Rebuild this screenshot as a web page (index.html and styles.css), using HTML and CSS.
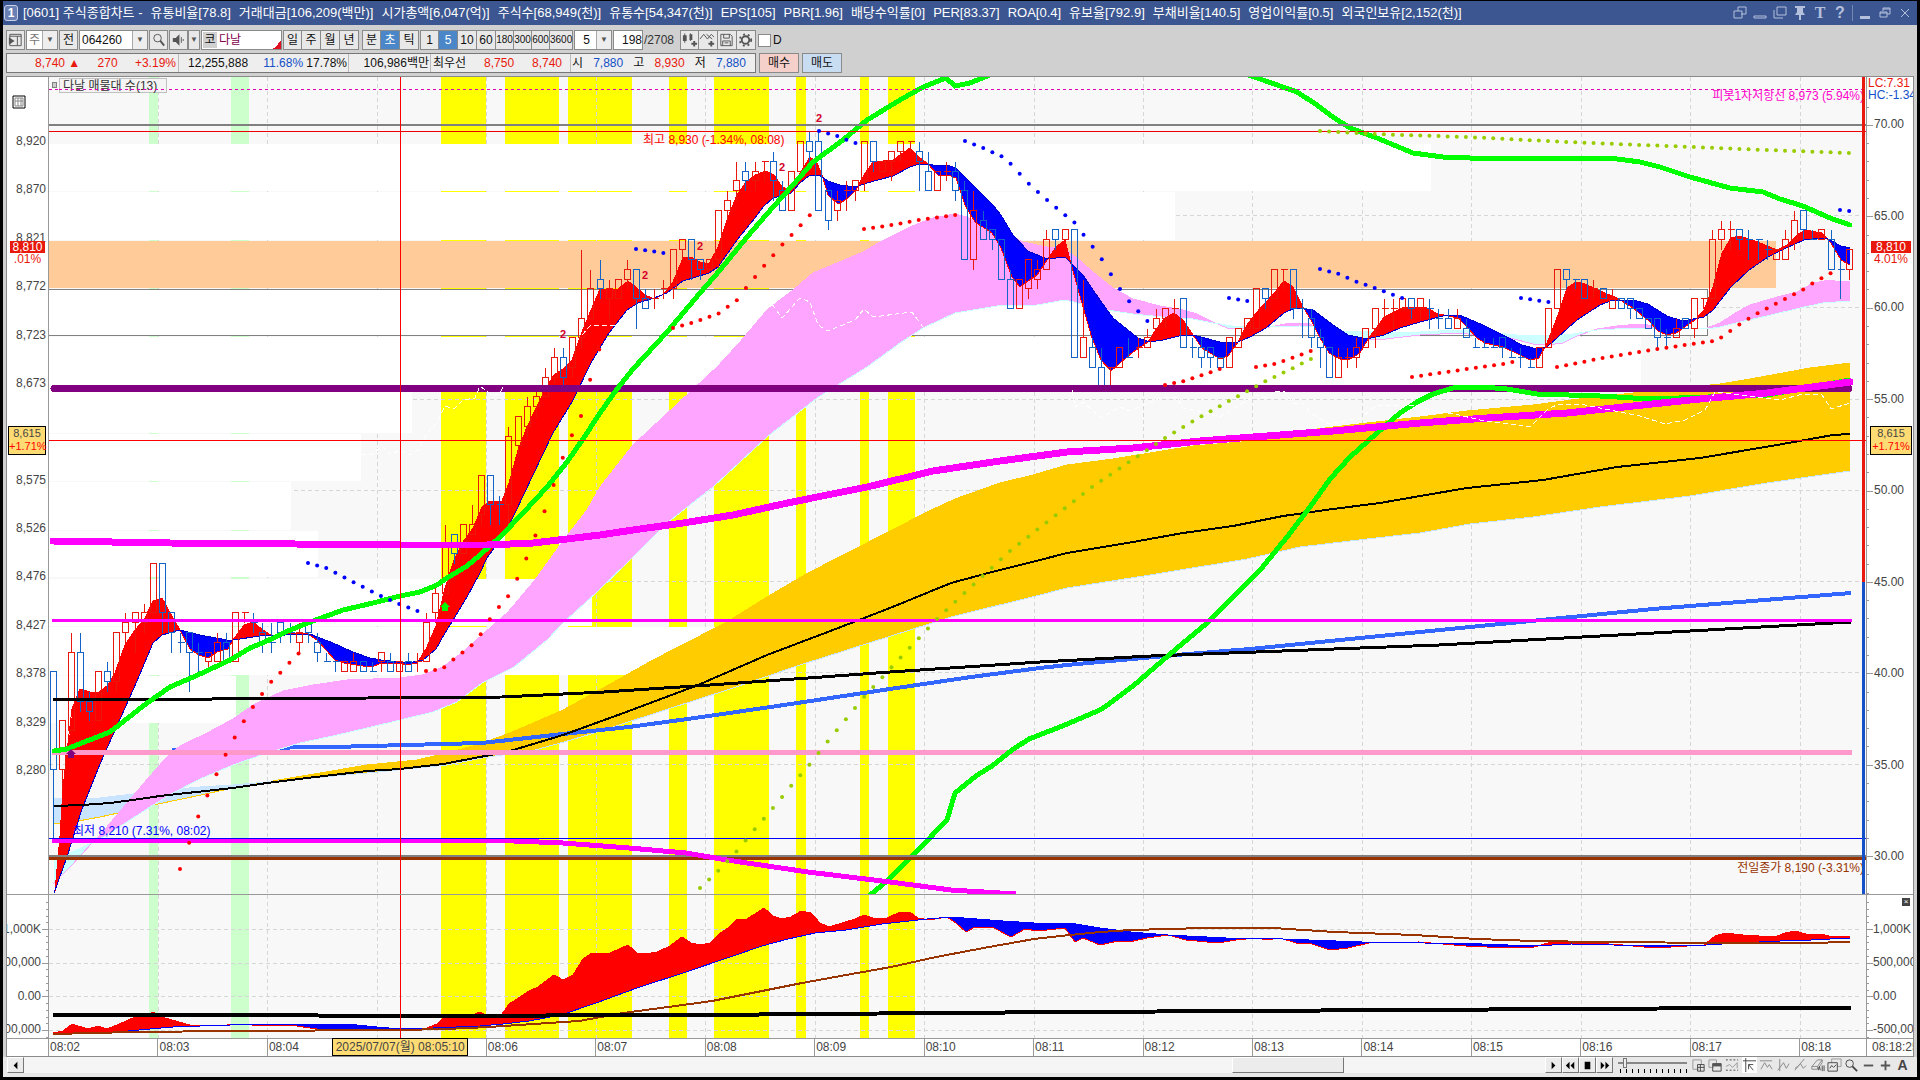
FILE: index.html
```html
<!DOCTYPE html>
<html lang="ko">
<head>
<meta charset="utf-8">
<title>주식종합차트</title>
<link rel="stylesheet" href="styles.css">
</head>
<body>
<div class="window">
  <header class="titlebar">
    <span class="badge">1</span>
    <h1 class="title"><span>[0601] 주식종합차트 -</span><span>유통비율[78.8]</span><span>거래대금[106,209(백만)]</span><span>시가총액[6,047(억)]</span><span>주식수[68,949(천)]</span><span>유통수[54,347(천)]</span><span>EPS[105]</span><span>PBR[1.96]</span><span>배당수익률[0]</span><span>PER[83.37]</span><span>ROA[0.4]</span><span>유보율[792.9]</span><span>부채비율[140.5]</span><span>영업이익률[0.5]</span><span>외국인보유[2,152(천)]</span></h1>
    <div class="win-tools">
      <button aria-label="연결"><svg viewBox="0 0 16 16"><path d="M6 6V2h8v7H9M2 6h8v7H2z"/></svg></button>
      <button aria-label="접기"><svg viewBox="0 0 16 16"><path d="M2 11h12v2H2z"/></svg></button>
      <button aria-label="복제"><svg viewBox="0 0 16 16"><path d="M5 2h9v8H5zM2 5v8h9"/></svg></button>
      <button aria-label="고정"><svg viewBox="0 0 16 16"><path class="solid" d="M3 1h10v2h-2v4l2 3H9v5H7v-5H3l2-3V3H3z"/></svg></button>
      <button aria-label="글꼴" class="glyph serif">T</button>
      <button aria-label="도움말" class="glyph">?</button>
      <i class="rule"></i>
      <button aria-label="최소화"><svg viewBox="0 0 16 16"><path class="solid" d="M3 11h10v3H3z"/></svg></button>
      <button aria-label="이전 크기"><svg viewBox="0 0 16 16"><path d="M6 6V3h7v6h-3M3 7h7v5H3zM3 8h7M6 4h7"/></svg></button>
      <button aria-label="닫기"><svg viewBox="0 0 16 16"><path d="M4 4l8 8M12 4l-8 8"/></svg></button>
    </div>
  </header>

  <div class="toolbar">
    <button class="tb" aria-label="목록"><svg viewBox="0 0 18 18"><path d="M3 3h12v12H3zM3 5h12M11 5v10"/><path class="solid" d="M2 6l6 4-6 4z"/></svg></button>
    <label class="select w32 dim"><select aria-label="구분"><option>주</option></select></label>
    <button class="tb">전</button>
    <label class="select w68"><input value="064260" aria-label="종목코드"></label>
    <button class="tb" aria-label="검색"><svg viewBox="0 0 18 18"><circle cx="8" cy="7" r="4"/><path d="M11 10l4 5" stroke-width="2"/></svg></button>
    <button class="tb" aria-label="소리"><svg viewBox="0 0 18 18"><path class="solid" d="M3 7h3l4-4v12l-4-4H3z"/><path d="M12 6v6M14 8v2"/></svg></button>
    <button class="tb narrow" aria-label="소리 메뉴">▼</button>
    <div class="stock"><b>코</b><span>다날</span></div>
    <div class="group"><button class="tb">일</button><button class="tb">주</button><button class="tb">월</button><button class="tb">년</button></div>
    <div class="group spaced"><button class="tb">분</button><button class="tb on">초</button><button class="tb">틱</button></div>
    <div class="group"><button class="tb">1</button><button class="tb on">5</button><button class="tb">10</button><button class="tb">60</button><button class="tb long">180</button><button class="tb long">300</button><button class="tb long">600</button><button class="tb longer">3600</button></div>
    <label class="select w38 center"><select aria-label="간격"><option>5</option></select></label>
    <input class="count" value="198" aria-label="표시 봉수">
    <span class="total">/2708</span>
    <div class="group">
      <button class="tb" aria-label="차트 추가"><svg viewBox="0 0 18 18"><path class="solid" d="M2 4h4v6H2zM9 3h3v6H9zM11 12h6v2h-6zM13 10h2v6h-2z"/><path d="M4 2v10M10 2v8"/></svg></button>
      <button class="tb" aria-label="지표 추가"><svg viewBox="0 0 18 18"><path d="M1 8l4-5 4 5 4-5 3 3M8 3l6 5"/><path class="solid" d="M10 12h6v2h-6zM12 10h2v6h-2z"/></svg></button>
      <button class="tb" aria-label="저장"><svg viewBox="0 0 18 18"><path d="M3 3h10l2 2v10H3zM6 3v4h6V3M5 15v-5h8v5M7 12h4"/></svg></button>
      <button class="tb" aria-label="설정"><svg viewBox="0 0 18 18"><circle cx="9" cy="9" r="4" stroke-width="2"/><circle cx="9" cy="9" r="6" stroke-width="2" stroke-dasharray="2 3"/></svg></button>
    </div>
    <label class="check"><input type="checkbox">D</label>
  </div>

  <div class="quotes">
    <div class="quote-box">
      <div class="cell c1 up"><span>8,740 ▲</span><span>270</span><span>+3.19%</span></div>
      <div class="cell c2"><span>12,255,888</span><span class="down push">11.68%</span><span>17.78%</span></div>
      <div class="cell c3"><span>106,986백만</span></div>
      <div class="cell c4"><span>최우선</span><span class="up">8,750</span><span class="up">8,740</span></div>
      <div class="cell c5"><span>시</span><span class="down">7,880</span><span>고</span><span class="up">8,930</span><span>저</span><span class="down">7,880</span></div>
    </div>
    <button class="order buy">매수</button>
    <button class="order sell">매도</button>
  </div>

  <main class="chart">
    <div class="axis left main-row">
      <svg class="grid-icon" viewBox="0 0 14 14"><path d="M1 1h12v12H1z"/><path class="in" d="M3 3h8v8H3zM3 6h8M6 3v8M9 3v8"/></svg>
      <div class="prices"><span>8,920</span><span>8,870</span><span>8,821</span><span>8,772</span><span>8,723</span><span>8,673</span><span class="blank"></span><span>8,575</span><span>8,526</span><span>8,476</span><span>8,427</span><span>8,378</span><span>8,329</span><span>8,280</span></div>
      <div class="now"><b>8,810</b><span>.01%</span></div>
      <div class="cross"><span>8,615</span><em>+1.71%</em></div>
    </div>
    <svg class="plot main-row" id="price" viewBox="49 77 1817 817" preserveAspectRatio="none"></svg>
    <div class="axis right main-row">
      <svg class="ticks" id="ticks-main" viewBox="0 77 46 817" preserveAspectRatio="none"></svg>
      <div class="extremes"><span class="up">LC:7.31</span><span class="down">HC:-1.34</span></div>
      <div class="scores"><span>70.00</span><span>65.00</span><span>60.00</span><span>55.00</span><span>50.00</span><span>45.00</span><span>40.00</span><span>35.00</span><span>30.00</span></div>
      <div class="now"><b>8,810</b><span>4.01%</span></div>
      <div class="cross"><span>8,615</span><em>+1.71%</em></div>
    </div>

    <div class="axis left sub-row">
      <svg class="ticks" id="ticks-left" viewBox="0 895 41 143" preserveAspectRatio="none"></svg>
      <div class="volumes"><span>1,000K</span><span>500,000</span><span>0.00</span><span>-500,000</span></div>
    </div>
    <svg class="plot sub-row" id="volume" viewBox="49 895 1817 143" preserveAspectRatio="none"></svg>
    <div class="axis right sub-row">
      <svg class="ticks" id="ticks-right" viewBox="0 895 46 143" preserveAspectRatio="none"></svg>
      <button class="close" aria-label="지표 닫기">×</button>
      <div class="volumes"><span>1,000K</span><span>500,000</span><span>0.00</span><span>-500,000</span></div>
    </div>

    <div class="time-pad"></div>
    <div class="times">
      <span>08:02</span><span>08:03</span><span>08:04</span><span></span><span>08:06</span><span>08:07</span><span>08:08</span><span>08:09</span><span>08:10</span><span>08:11</span><span>08:12</span><span>08:13</span><span>08:14</span><span>08:15</span><span>08:16</span><span>08:17</span><span class="last">08:18</span>
      <div class="date">2025/07/07(월) 08:05:10</div>
    </div>
    <div class="time-end">08:18:25</div>
  </main>

  <footer class="bottom">
    <button class="key" aria-label="왼쪽으로"><svg viewBox="0 0 16 16"><path class="solid" d="M10 4v8L6 8z"/></svg></button>
    <div class="track"><i class="before"></i><i class="thumb"></i><i class="after"></i></div>
    <button class="key" aria-label="재생"><svg viewBox="0 0 16 16"><path class="solid" d="M6 4v8l4-4z"/></svg></button>
    <button class="key" aria-label="뒤로"><svg viewBox="0 0 16 16"><path class="solid" d="M7 4v8L3 8zM12 4v8L8 8z"/></svg></button>
    <button class="key" aria-label="정지"><svg viewBox="0 0 16 16"><path class="solid" d="M5 4h6v8H5z"/></svg></button>
    <button class="key" aria-label="앞으로"><svg viewBox="0 0 16 16"><path class="solid" d="M4 4v8l4-4zM9 4v8l4-4z"/></svg></button>
    <div class="speed"><input type="range" min="0" max="100" value="8" aria-label="속도"><i></i></div>
    <div class="draw-tools">
      <button aria-label="추가"><svg viewBox="0 0 16 16"><path d="M8 12H2V2h9v5" stroke="#999"/><path d="M7 7h7v7H7zM7 10h7M10 7v7"/></svg></button>
      <button aria-label="겹치기"><svg viewBox="0 0 16 16"><path d="M6 10H1V2h8v4" stroke="#999"/><path d="M5 6h9v8H5z"/><path class="solid" d="M5 6h9v3H5z"/></svg></button>
      <button aria-label="구간"><svg viewBox="0 0 16 16"><path d="M1 2h13M1 13h13" stroke-dasharray="2 2"/><path d="M1 9l4-2 3 3 5-5M13 5v6" stroke="#999"/></svg></button>
      <button aria-label="십자선" class="pressed"><svg viewBox="0 0 16 16"><path d="M1 3h14M4 0v15"/><path d="M12 13L7 7M7 12V7h5"/></svg></button>
      <button aria-label="수평선"><svg viewBox="0 0 16 16"><path d="M1 3h13M2 12l4-7 3 5 2-3 3 5" stroke="#888"/></svg></button>
      <button aria-label="수직선"><svg viewBox="0 0 16 16"><path d="M4 1v13M2 13l6-8 3 6 3-5" stroke="#888"/></svg></button>
      <button aria-label="추세선"><svg viewBox="0 0 16 16"><path d="M2 13L12 1M2 11l3-2 3-3 3 5 3-3" stroke="#888"/></svg></button>
      <button aria-label="지우기"><svg viewBox="0 0 16 16"><path d="M2 9l6-7h5l-5 7zM2 9v3h6V9M8 12l5-7V2" stroke="#888"/><path d="M9 13l1-4 1 4M13 8v6M15 8v6"/></svg></button>
      <button aria-label="차트 모음"><svg viewBox="0 0 16 16"><path d="M5 5V1h10v8h-4" stroke="#999"/><path d="M1 5h10v9H1zM3 11l2-3 2 2 3-3"/></svg></button>
      <button aria-label="확대경"><svg viewBox="0 0 16 16"><circle cx="6" cy="6" r="4"/><path d="M9 9l5 5" stroke-width="2"/></svg></button>
      <button aria-label="축소"><svg viewBox="0 0 16 16"><path class="solid" d="M3 7h10v2H3z"/></svg></button>
      <button aria-label="확대"><svg viewBox="0 0 16 16"><path class="solid" d="M3 7h10v2H3zM7 3h2v10H7z"/></svg></button>
      <button aria-label="자동" class="auto">A</button>
    </div>
  </footer>
</div>
<script src="script.js"></script>
</body>
</html>
```

FILE: styles.css
```css
* { box-sizing: border-box; }

body {
  margin: 0;
  padding: 1px 3px 3px;
  height: 100vh;
  background: #000;
  color: #111;
  font: 12px/16px "Liberation Sans Narrow", "Liberation Sans", "Noto Sans CJK KR", sans-serif;
}

button, input, select { font: inherit; color: inherit; margin: 0; padding: 0; }
svg { display: block; fill: none; stroke: #555; }
svg .solid { fill: #555; stroke: none; }

.up { color: #e8180c; }
.down { color: #1450c8; }

.window {
  display: flex;
  flex-direction: column;
  height: 100%;
  background: #d0d0d0;
}

/* title bar */
.titlebar {
  display: flex;
  align-items: center;
  height: 24px;
  padding: 0 4px 0 1px;
  background: #3b5690;
  color: #fff;
}
.badge {
  width: 14px;
  height: 16px;
  border: 1px solid #c8d2e8;
  border-radius: 3px;
  background: #6a80b4;
  font-weight: bold;
  line-height: 14px;
  text-align: center;
}
.title {
  display: flex;
  flex: 1;
  gap: 8px;
  min-width: 0;
  margin: 0 0 0 5px;
  overflow: hidden;
  font-size: 13px;
  font-weight: normal;
  white-space: nowrap;
}
.win-tools { display: flex; align-items: center; gap: 4px; }
.win-tools button { width: 16px; height: 18px; border: 0; background: none; color: #b4c0dc; }
.win-tools svg { width: 16px; height: 16px; stroke: #b4c0dc; }
.win-tools .solid { fill: #b4c0dc; }
.win-tools .glyph { font-size: 16px; font-weight: bold; }
.win-tools .serif { font-family: "Liberation Serif", serif; }
.win-tools .rule { width: 1px; height: 16px; background: #7488b4; }

/* toolbar */
.toolbar {
  display: flex;
  align-items: center;
  gap: 1px;
  height: 20px;
  margin: 5px 3px 3px;
  white-space: nowrap;
}
.tb {
  width: 19px;
  height: 20px;
  border: 1px solid #8a8a8a;
  background: #e8e8e8;
  text-align: center;
}
.tb svg { width: 17px; height: 18px; }
.tb.narrow { width: 12px; margin-left: -1px; color: #555; font-size: 8px; }
.tb.on { background: #4a86c8; color: #fff; }
.group { display: flex; }
.group .tb + .tb { border-left-width: 0; }
.group.spaced { margin-left: 2px; }
.group .long { width: 18px; font-size: 10px; }
.group .longer { width: 23px; font-size: 10px; }
.select {
  display: flex;
  height: 20px;
  border: 1px solid #8a8a8a;
  background: #fff;
}
.select::after {
  content: "▼";
  width: 14px;
  border-left: 1px solid #aaa;
  background: #eee;
  color: #555;
  font-size: 8px;
  line-height: 18px;
  text-align: center;
}
.select select, .select input {
  flex: 1;
  width: 10px;
  min-width: 0;
  padding-left: 2px;
  border: 0;
  background: #fff;
  appearance: none;
}
.select.dim { color: #777; }
.select.center select { text-align: center; }
.w32 { width: 32px; }
.w68 { width: 69px; }
.w38 { width: 38px; }
.stock {
  display: flex;
  gap: 2px;
  width: 81px;
  height: 20px;
  padding: 1px;
  border: 1px solid #8a8a8a;
  background: linear-gradient(135deg, transparent 50%, #e01020 50%) right bottom / 8px 8px no-repeat #fff;
  color: #80004c;
}
.stock b { width: 14px; background: #d0d0d0; color: #111; font-weight: normal; text-align: center; }
.count { width: 30px; height: 20px; border: 1px solid #8a8a8a; background: #fff; text-align: right; }
.total { width: 35px; color: #333; }
.check { display: flex; align-items: center; gap: 2px; margin-left: 1px; }
.check input { width: 13px; height: 13px; appearance: none; border: 1px solid #8a8a8a; background: #fff; }

/* quote strip */
.quotes { display: flex; gap: 3px; height: 20px; margin: 0 3px 3px; white-space: nowrap; }
.quote-box { display: flex; width: 750px; border: 1px solid #777; background: #eee; }
.cell { display: flex; align-items: center; justify-content: space-between; border-right: 1px solid #bbb; }
.cell:last-child { border: 0; }
.c1 { width: 172px; padding: 0 2px 0 28px; }
.c2 { width: 170px; padding: 0 1px 0 9px; }
.push { margin-left: 12px; }
.c3 { width: 82px; justify-content: flex-end; padding-right: 1px; }
.c4 { width: 140px; padding: 0 8px 0 2px; }
.c5 { flex: 1; padding: 0 9px 0 1px; }
.order { width: 40px; border: 1px solid #8a8a8a; }
.buy { background: #f5d0ca; }
.sell { background: #c8dcf2; }

/* chart */
.chart {
  display: grid;
  flex: 1;
  grid-template-columns: 42px minmax(0, 1fr) 47px;
  grid-template-rows: minmax(0, 1fr) 144px 18px;
  min-height: 0;
  margin: 0 3px;
  border: 1px solid #8a8a8a;
  background: #fff;
}
.plot { width: 100%; height: 100%; background: #f8f8f8; font-size: 12px; }
.sub-row { border-top: 1px solid #999; }
.axis { position: relative; min-width: 0; min-height: 0; overflow: hidden; color: #444; }
.axis.left { border-right: 1px solid #999; }
.axis.right { border-left: 1px solid #999; }
.ticks { position: absolute; inset: 0; width: 100%; height: 100%; stroke: #999; }
.grid-icon { position: absolute; left: 5px; top: 18px; width: 14px; height: 14px; stroke: #000; }
.grid-icon .in { stroke: #888; }
.prices, .scores, .volumes { display: flex; flex-direction: column; justify-content: space-between; height: 100%; }
.prices { align-items: flex-end; padding: 56px 2px 116px 0; }
.blank { height: 16px; }
.scores { padding: 39px 0 30px 7px; }
.left .volumes { align-items: flex-end; padding: 26px 7px 1px 0; }
.right .volumes { padding: 26px 0 1px 6px; }
.extremes { position: absolute; left: 1px; top: 0; display: flex; flex-direction: column; line-height: 12px; }
.now, .cross { position: absolute; line-height: 12px; text-align: center; }
.now { top: 20%; width: 35px; margin-top: 1px; color: #e8180c; }
.now b { display: block; background: #e8180c; color: #fff; font-weight: normal; }
.left .now { left: 3px; }
.right .now { left: 4px; width: 40px; }
.cross {
  top: 43%;
  height: 29px;
  margin-top: -2px;
  border: 1px solid #000;
  background: #ffdc73;
  font-size: 11px;
  line-height: 13px;
}
.left .cross { left: 1px; width: 38px; }
.right .cross { left: 3px; width: 42px; }
.cross span, .cross em { display: block; font-style: normal; white-space: nowrap; }
.cross em { color: #f00; }
.close { position: absolute; right: 3px; top: 3px; width: 8px; height: 8px; border: 0; background: #444; color: #fff; font-size: 8px; line-height: 8px; }

.times { position: relative; display: flex; border-top: 1px solid #999; color: #444; }
.times span { flex: 1094 1 0; padding-left: 1px; border-left: 1px solid #999; }
.times span:first-child { border: 0; }
.times .last { flex-grow: 660; }
.time-pad { border-top: 1px solid #999; border-right: 1px solid #999; }
.time-end { padding-left: 5px; border-top: 1px solid #999; border-left: 1px solid #999; color: #444; overflow: hidden; white-space: nowrap; }
.date {
  position: absolute;
  left: 19%;
  top: -1px;
  width: 136px;
  height: 18px;
  margin-left: -62px;
  border: 1px solid #000;
  background: #ffdc73;
  text-align: center;
}

/* scroll bar and drawing tools */
.bottom { display: flex; height: 20px; padding: 0 7px 4px 4px; background: #e8e8e8; }
.bottom svg { width: 15px; height: 15px; stroke: #444; }
.key { width: 17px; height: 16px; border: 1px solid; border-color: #fff #777 #777 #fff; background: #ececec; }
.key .solid { fill: #000; }
.track { display: flex; flex: 1; background: #f5f5f5; }
.before { flex: 1210; }
.thumb { flex: 111; border: 1px solid; border-color: #fff #777 #777 #fff; background: #ececec; }
.after { flex: 201; }
.speed { width: 78px; padding: 0 4px 0 5px; }
.speed input { display: block; width: 69px; height: 11px; appearance: none; background: linear-gradient(#888, #888) center / 100% 2px no-repeat; }
.speed input::-webkit-slider-thumb { appearance: none; width: 4px; height: 10px; border: 1px solid #777; background: #eee; }
.speed i { display: block; height: 4px; margin: 1px 0 0 2px; background: repeating-linear-gradient(90deg, #000 0 1px, transparent 1px 6px); }
.draw-tools { display: flex; gap: 2px; }
.draw-tools button { width: 15px; height: 16px; border: 0; background: none; }
.draw-tools .pressed { background: #fff; }
.draw-tools .auto { color: #444; font-size: 14px; font-weight: bold; }
```

FILE: script.js
```js
const NS = 'http://www.w3.org/2000/svg';
const STEP = 9.118;      // width of one bar
const FIRST = 53.5;      // centre of the first bar
const barX = i => FIRST + STEP * i;
// depth of a price below the high of 8,930, in ticks of 10 won
const tickY = k => Math.round(131.3 + 9.818 * k);

function add(svg, tag, attrs, text) {
  const el = document.createElementNS(NS, tag);
  for (const k in attrs) el.setAttribute(k, attrs[k]);
  if (text) el.textContent = text;
  svg.appendChild(el);
  return el;
}
const parse = s => s.trim().split(/\s+/).map(p => p.split(',').map(Number));
const path = (svg, d, stroke, width = 1, more = {}) =>
  add(svg, 'path', { d, stroke, 'stroke-width': width, fill: 'none', 'shape-rendering': 'crispEdges', ...more });
const line = (svg, pts, stroke, width, more) =>
  path(svg, 'M' + parse(pts).map(p => p.join(' ')).join('L'), stroke, width, more);
const rect = (svg, x0, y0, x1, y1, fill) =>
  add(svg, 'rect', { x: x0, y: y0, width: x1 - x0, height: y1 - y0, fill, stroke: 'none', 'shape-rendering': 'crispEdges' });

function at(pts, x) {
  let i = 1;
  while (i < pts.length - 1 && pts[i][0] < x) i++;
  const [a, b] = [pts[i - 1], pts[i]];
  return a[1] + (b[1] - a[1]) * Math.max(0, Math.min(1, (x - a[0]) / (b[0] - a[0])));
}
// area between two curves, coloured by which one is on top
function band(svg, a, b, over, under, edgeA, edgeB) {
  const pa = parse(a), pb = parse(b);
  let up = '', down = '';
  for (let x = 54; x <= 1849; x++) {
    const ya = at(pa, x), yb = at(pb, x);
    const seg = `M${x + .5} ${Math.min(ya, yb)}V${Math.max(ya, yb)}`;
    if (ya < yb) up += seg; else down += seg;
  }
  path(svg, up, over);
  path(svg, down, under);
  line(svg, a, edgeA, 1);
  line(svg, b, edgeB, 1);
}
function dots(svg, runs, fill) {
  for (const run of runs) {
    const p = parse(run), end = p[p.length - 1][0];
    for (let x = p[0][0]; x <= end + 2; x += STEP) {
      add(svg, 'circle', { cx: x, cy: at(p, x), r: 2, fill, stroke: 'none' });
    }
  }
}

const STRIPES = [[149, 158, '#cfc'], [231, 249, '#cfc'], [441, 486], [505, 559], [568, 632], [669, 687], [714, 769], [796, 806], [860, 869], [888, 915]];
function backdrop(svg, top, bottom, rows) {
  for (const [a, b, c] of STRIPES) rect(svg, a, top, b, bottom, c || '#ff0');
  let d = '';
  for (let i = 1; i <= 16; i++) d += `M${Math.round(48.5 + 109.45 * i) + .5} ${top}V${bottom}`;
  for (const y of rows) d += `M49 ${y + .5}H1862`;
  path(svg, d, '#d6d6d6', 1, { 'stroke-dasharray': '4 3' });
}

// ---- price panel -------------------------------------------------------
const P = document.getElementById('price');
backdrop(P, 77, 894, [215, 307, 399, 490, 581, 672, 764]);

// volume profile: top, bottom, right end
for (const [t, b, r] of [[144, 191, 1431], [192, 240, 1175], [289, 336, 1707], [337, 386, 1641], [386, 433, 412], [434, 481, 361], [482, 530, 291], [531, 577, 318], [579, 626, 592], [627, 675, 730], [676, 723, 236]])
  rect(P, 49, t, r, b, '#fff');
rect(P, 49, 241, 1776, 288, '#fc9');
path(P, 'M49 289.5H1707.5V335.5H49', '#808080');

const band3A = '53,823 67,823 100,817 127,811 153,805 187,798 233,788 267,782 290,778 320,773 367,765 417,760 447,753 480,744 510,733 563,710 612,683 653,660 686,643 727,622 767,597 808,573 849,552 900,526 927,512 955,499 1000,483 1033,475 1067,465 1113,459 1150,453 1193,446 1253,441 1300,431 1367,423 1420,417 1467,411 1533,405 1587,398 1633,393 1720,384 1750,379 1810,368 1850,363';
const band3B = '53,799 100,798 133,794 167,790 200,787 233,785 267,782 290,780 313,778 367,773 417,768 447,765 482,758 535,750 571,740 604,730 665,710 727,690 800,665 869,643 951,617 1040,595 1067,588 1150,575 1247,559 1300,547 1367,539 1420,533 1470,524 1533,517 1600,507 1690,496 1767,483 1850,471';
band(P, band3A, band3B, '#fc0', '#c8e4ff', '#fc0', '#c8e4ff');

line(P, '172,750 250,748 333,747 443,744 482,743 563,734 629,727 702,717 784,705 890,689 971,677 1040,668 1067,665 1176,655 1250,649 1470,627 1653,609 1851,593', '#36f', 4);

const band2A = '53,884 72,865 92,843 100,835 117,815 133,796 150,776 167,757 180,746 207,733 233,719 253,705 283,691 313,685 347,680 400,678 422,675 443,667 463,652 482,635 508,612 535,580 563,541 587,510 600,487 633,445 660,420 690,392 717,367 740,342 767,310 793,290 813,273 837,263 863,252 880,242 910,227 920,223 933,218 955,214 967,217 980,223 997,226 1010,235 1023,242 1047,247 1065,249 1077,258 1093,272 1113,288 1133,299 1160,306 1183,310 1197,314 1213,322 1227,328 1250,329 1270,327 1290,323 1310,324 1333,334 1357,339 1377,340 1420,335 1460,333 1483,336 1510,338 1533,344 1547,345 1563,343 1577,336 1597,329 1617,326 1640,324 1663,327 1683,329 1707,328 1720,323 1737,312 1750,305 1777,297 1797,292 1813,283 1830,280 1840,282 1850,281';
const band2B = '53,860 72,852 92,843 100,839 127,822 150,807 173,793 200,779 233,765 267,753 300,743 333,736 367,728 400,720 433,712 457,702 482,683 514,667 547,640 563,623 596,593 630,560 667,523 713,487 767,437 817,398 867,367 900,343 923,328 955,313 997,306 1037,305 1065,300 1087,305 1107,310 1133,314 1163,317 1193,319 1213,323 1233,326 1267,327 1300,326 1320,327 1343,331 1373,332 1420,332 1457,330 1483,332 1517,335 1547,336 1573,334 1597,330 1633,328 1667,328 1707,329 1720,327 1740,322 1767,316 1800,308 1823,303 1850,301';
band(P, band2A, band2B, '#fda5ff', '#ccffff', '#fda5ff', '#ccffff');

const fast = '54,893 55,891 60,836 63,788 68,743 72,709 80,689 90,692 99,692 107,686 115,673 125,645 135,630 144,620 153,601 162,598 172,616 180,630 190,649 199,655 208,658 217,652 228,649 233,640 244,625 253,622 263,630 272,636 281,636 290,633 308,634 317,640 326,650 335,660 344,663 363,666 372,667 381,663 399,663 408,665 417,663 426,649 436,626 445,588 454,560 463,542 473,528 482,507 490,501 502,501 509,483 518,450 527,427 536,408 545,390 554,375 563,369 572,360 582,332 591,310 600,289 618,289 628,281 636,287 645,295 654,299 664,294 673,282 683,258 691,257 700,262 709,264 718,247 727,220 737,195 746,182 755,175 766,171 774,175 782,187 791,190 800,173 810,157 817,163 823,178 828,195 838,204 847,199 856,190 864,175 873,162 893,160 910,148 920,158 927,163 938,175 948,175 956,178 965,205 975,222 992,233 1001,248 1012,277 1020,287 1028,281 1037,275 1047,260 1056,247 1065,240 1070,260 1083,307 1092,338 1101,360 1111,371 1120,363 1133,352 1148,342 1157,328 1165,318 1174,313 1183,320 1193,335 1202,348 1220,359 1228,356 1238,342 1247,325 1256,313 1275,292 1284,281 1293,287 1303,307 1311,320 1320,338 1329,353 1340,359 1350,359 1360,353 1368,339 1377,327 1384,317 1402,308 1412,307 1425,307 1438,314 1449,316 1458,318 1467,327 1477,338 1485,343 1503,347 1520,355 1530,360 1539,358 1547,343 1558,315 1567,288 1576,282 1585,284 1600,291 1617,298 1633,308 1649,321 1658,331 1667,335 1676,333 1695,320 1704,310 1713,287 1722,253 1731,238 1740,236 1758,242 1777,250 1787,245 1797,235 1805,230 1822,233 1831,243 1841,260 1850,265';
const slow = '54,893 67,857 82,809 100,764 117,726 137,681 153,643 162,635 180,630 200,635 227,640 233,640 260,636 310,634 333,643 353,652 370,658 381,660 408,663 423,660 436,649 445,633 455,617 467,597 480,573 487,558 507,530 533,475 553,433 572,402 591,363 609,333 627,310 638,303 654,298 667,293 683,281 709,273 718,267 737,240 755,218 764,206 773,198 791,193 800,183 810,175 819,175 828,181 840,185 855,187 867,183 893,176 910,167 919,164 933,165 950,166 956,168 975,187 992,204 1001,215 1013,235 1028,251 1047,259 1065,257 1083,275 1100,300 1113,318 1138,338 1150,342 1163,340 1183,335 1197,336 1220,342 1238,342 1250,337 1266,328 1284,313 1295,308 1313,310 1333,325 1348,335 1367,339 1384,335 1400,328 1420,322 1447,315 1462,316 1483,325 1503,335 1522,345 1537,349 1547,347 1558,337 1577,320 1600,305 1613,300 1633,300 1648,304 1667,316 1683,321 1704,317 1713,310 1731,287 1749,270 1768,257 1786,248 1804,240 1820,238 1828,239 1841,246 1850,248';
band(P, fast, slow, '#f00', '#00f', '#f00', '#00c');

// candles: colour, body top, body bottom, high, low
const CANDLES = `b55,65,55,72 r60,65,60,67 r53,61,51,61 b53,58,51,59 b58,59,57,60 r55,60,55,60 b55,56,54,57 r51,56,51,57 r50,51,49,52 r49,50,49,53
r49,50,48,51 r44,49,44,49 b44,49,44,51 b49,51,49,53 b52,52,51,53 b51,53,51,57 b53,53,52,55 r53,54,53,55 r52,54,51,54 b52,54,51,54
r49,54,49,54 r49,49,49,50 b50,50,49,51 b51,52,50,53 b52,52,50,53 b50,51,50,52 b51,51,50,52 r51,52,50,53 b50,51,50,52 b52,53,51,54
b54,54,53,54 b54,54,54,55 r54,55,54,55 r54,55,53,55 b54,55,54,55 b55,55,54,55 r53,54,53,55 b54,55,53,55 r54,55,54,55 b54,55,53,55
r54,54,53,55 r50,54,49,54 r47,49,46,50 r42,47,40,47 b41,43,41,44 r40,43,40,43 r40,41,38,41 r35,39,35,40 b35,38,35,40 b38,38,37,40
r31,38,30,40 r29,32,29,33 r28,30,27,31 r27,28,26,29 r25,27,24,27 r23,25,22,26 b23,25,22,26 r21,24,21,25 r19,21,12,22 r16,19,14,19
b15,16,13,17 r16,17,15,19 r15,17,15,17 r14,15,13,16 b14,17,14,20 b17,18,16,18 r17,17,16,18 r16,16,15,17 r12,16,12,17 r11,12,11,13
b11,13,11,15 b13,14,13,15 r13,14,13,14 r8,13,8,14 r7,8,6,9 r5,6,3,7 b4,5,3,6 r4,5,3,6 r3,3,3,5 b3,5,2,7
b6,8,5,8 r4,8,4,8 r1,4,1,5 b1,2,0,3 b1,8,0,8 b6,9,6,10 r7,8,6,9 r6,6,5,8 r5,6,5,7 r1,5,1,6
b1,3,1,4 r3,4,3,4 r2,3,2,5 r1,2,1,3 r1,1,1,2 b2,3,1,6 b4,6,2,6 r4,6,4,6 r4,4,3,5 b4,6,3,7
b6,13,5,13 r8,13,6,14 b9,11,8,11 b10,11,10,12 b11,15,11,15 b15,18,14,18 r15,18,15,18 r13,16,13,17 r14,15,13,16 r11,14,10,14
b10,11,10,12 r10,11,10,11 b10,23,10,23 r21,23,15,23 b22,24,21,24 b24,26,22,26 r24,24,24,26 r22,24,22,24 b23,23,21,23 r22,22,21,23
r21,22,20,22 r19,20,18,20 r18,19,18,20 r18,18,17,19 b17,22,17,22 b22,22,21,23 b22,23,21,24 b22,23,22,24 b23,24,23,24 r21,24,21,24
r20,22,20,22 r19,20,19,20 r16,20,16,20 b16,17,16,18 r14,17,14,17 r14,14,14,16 b14,18,14,19 b18,18,17,21 b19,21,18,22 b21,22,20,24
b22,25,22,25 r23,25,22,25 r23,23,22,24 r22,23,21,24 r20,22,20,22 r18,20,18,22 r18,18,17,19 r18,18,17,20 r17,18,17,18 b17,18,17,19
r17,18,17,19 b18,18,17,20 b19,19,18,20 b19,20,18,20 r19,20,18,20 b20,21,19,21 b22,22,21,22 b22,22,21,22 b22,22,21,22 b21,22,21,23
b23,23,22,23 b23,23,22,24 b24,24,23,24 r22,24,22,24 r18,22,18,22 r14,18,14,18 b14,15,14,16 b15,15,15,16 b15,17,15,17 r16,16,15,17
b16,17,16,17 r17,18,16,18 b17,18,17,18 b17,18,17,19 b18,19,18,19 b19,20,19,20 b19,21,19,22 b21,21,20,22 r20,21,19,21 b19,20,19,20
r17,20,17,21 r17,17,17,18 r11,17,10,17 r10,11,9,12 r10,10,9,12 b10,11,10,12 b11,11,10,13 b11,11,11,13 b12,12,11,13 r12,13,12,13
r11,13,10,13 r9,11,8,12 b8,10,8,11 b11,11,10,11 r10,11,10,11 b11,14,10,14 b14,14,13,17 r12,14,12,15`.split(/\s+/);
let red = '', blue = '';
CANDLES.forEach((c, i) => {
  const [top, bottom, high, low] = c.slice(1).split(',').map(n => tickY(+n) + .5);
  const x = Math.round(barX(i)) - .5;
  let d = `M${x} ${high}V${top}M${x} ${bottom}V${low + .5}`;
  d += top === bottom ? `M${x - 3} ${top}h7` : `M${x - 3} ${top}h6V${bottom}h-6z`;
  if (c[0] === 'r') red += d; else blue += d;
});
path(P, red, '#e8180c');
path(P, blue, '#1464c8');

// moving averages and levels
line(P, '54,806 82,805 110,803 133,800 160,796 187,793 233,788 267,783 307,778 367,771 400,769 443,764 480,757 510,751 563,735 629,711 698,685 767,655 833,630 890,608 951,583 992,572 1040,560 1067,553 1133,542 1183,533 1233,526 1283,516 1333,509 1380,503 1420,496 1467,488 1543,480 1617,467 1700,458 1777,445 1833,435 1850,434', '#000', 2);
line(P, '53,699 212,699 368,698 502,697 604,692 710,685 808,678 890,672 1040,662 1151,656 1439,645 1851,622', '#000', 3);
path(P, 'M52 752.5H1852', '#f9c', 5);
path(P, 'M54 388.5H1849', '#800080', 7, { 'stroke-linecap': 'round' });
line(P, '54,751 67,749 87,741 110,732 133,714 147,703 170,687 200,674 230,660 250,648 267,641 290,630 313,621 343,610 373,603 400,596 420,592 437,585 447,578 467,566 480,555 500,537 523,513 547,487 567,462 583,439 600,413 617,389 633,369 667,332 700,293 720,270 747,237 773,207 793,185 813,162 843,140 867,120 900,100 923,87 946,78 955,86 970,83 992,74', '#0f0', 5, { 'stroke-linecap': 'round' });
line(P, '1246,74 1280,86 1297,92 1317,105 1333,117 1350,128 1377,138 1413,153 1443,157 1470,158 1587,158 1617,159 1640,162 1660,167 1690,177 1730,188 1763,192 1780,199 1803,206 1830,218 1850,225', '#0f0', 5, { 'stroke-linecap': 'round' });
line(P, '869,896 888,880 918,850 947,820 955,793 976,776 992,766 1012,750 1029,739 1065,725 1102,709 1133,686 1176,649 1206,624 1225,605 1261,569 1287,537 1310,507 1330,479 1350,457 1377,433 1400,413 1417,402 1433,394 1453,388 1483,387 1507,389 1537,394 1600,396 1650,399 1767,395 1850,380', '#0f0', 5);
line(P, '53,541 170,543 295,544 400,545 487,545 533,543 567,539 600,535 633,530 683,523 733,515 783,504 817,497 867,487 900,479 933,471 1000,461 1067,452 1133,448 1200,441 1267,436 1333,431 1420,423 1487,418 1567,413 1633,406 1700,399 1767,393 1850,382', '#f0f', 7, { 'stroke-linecap': 'round' });
path(P, 'M52 620.5H1852', '#f0f', 3);
path(P, 'M49 856H1866', '#808080', 2);
path(P, 'M49 858.5H1866', '#930', 3);
line(P, '52,840.5 502,840.5 563,843 629,848 686,853 727,860 808,872 890,882 951,890 1016,894', '#f0f', 5);
path(P, 'M49 838.5H1866', '#00f');
path(P, 'M49 125H1866', '#808080', 2);
path(P, 'M49 131.5H1866', '#e00');
path(P, 'M49 89.5H1866', '#e000b8', 1, { 'stroke-dasharray': '3 3' });

const dash = { 'stroke-dasharray': '5 3' };
line(P, '361,454 373,454 382,446 391,455 400,450 409,455 418,450 427,433 436,424 445,406 454,409 463,400 475,398 480,386 490,394 500,394 503,386', '#fff', 1, dash);
line(P, '582,335 590,326 618,325', '#fff', 1, dash);
line(P, '772,304 782,318 800,298 810,302 818,325 828,331 855,320 864,309 873,317 912,312 923,327', '#fff', 1, dash);
line(P, '1072,390 1075,407 1083,402 1101,418 1120,407 1130,411 1163,397 1177,397 1183,408 1203,412 1220,417 1256,395 1267,398 1277,391 1284,391 1293,403 1302,403 1311,413 1329,424 1360,418 1377,405 1413,405 1440,412 1455,414 1480,420 1530,427 1549,408 1560,404 1580,404 1610,410 1640,416 1665,424 1685,420 1705,410 1715,392 1780,400 1803,394 1822,395 1831,409 1850,403', '#fff', 1, dash);

dots(P, ['308,563 326,568 353,582 381,596 399,604 417,611', '636,249 664,253', '819,131 837,136 855,143', '965,141 983,148 1001,156 1010,163 1028,183 1047,200 1065,215 1074,222 1083,234 1101,258 1120,289 1129,301 1147,321', '1229,298 1247,301', '1320,269 1339,274 1357,282 1375,288 1402,298', '1521,298 1548,302', '1840,210 1849,211'], '#00f');
dots(P, ['180,869 189,843 198,817 208,794 217,773 226,754 235,737 244,721 253,707 262,694 271,682 281,672 290,662 299,653', '426,671 436,670 445,667 454,659 463,652 472,645 481,634 490,619 499,607 509,595 518,577 527,557 536,534 545,510 554,484 563,457 572,435 582,414 591,376 600,347', '673,328 691,323 718,314 737,300 746,288 764,266 782,245 800,226 810,215', '864,229 892,225 919,220 955,215', '1165,385 1184,381 1211,372 1220,369', '1256,367 1275,364 1311,351', '1412,377 1439,373 1503,364 1512,362', '1557,367 1603,358 1658,349 1713,341 1722,337 1740,324 1758,313 1785,299 1804,289 1813,283 1831,273'], '#f00');
dots(P, ['700,888 718,871 737,851 755,829 773,808 791,786 810,764 828,741 864,697 901,657 937,619 974,584 1010,551 1056,515 1092,487 1129,462 1165,438 1193,421 1229,401 1266,381 1293,368 1311,359', '1320,131 1375,134 1402,135 1467,137 1567,142 1667,146 1767,150 1849,153'], '#9c0');

// signal marks
for (const [x, y] of [[819, 122], [782, 171], [700, 250], [645, 279], [563, 338]])
  add(P, 'text', { x, y, fill: '#d4002a', stroke: 'none', 'font-size': 11, 'font-weight': 'bold', 'text-anchor': 'middle' }, '2');
const arrow = (x, y, fill) => add(P, 'path', { d: `M${x} ${y - 5}l5 5h-2v4h-6v-4h-2z`, fill, stroke: 'none' });
arrow(445, 607, '#0f0');
arrow(71, 754, '#800080');

const label = (x, y, fill, anchor, text) => add(P, 'text', { x, y, fill, stroke: 'none', 'text-anchor': anchor }, text);
label(643, 144, '#f00', 'start', '최고 8,930 (-1.34%, 08:08)');
label(73, 835, '#00f', 'start', '최저 8,210 (7.31%, 08:02)');
label(1864, 100, '#f0c', 'end', '피봇1차저항선 8,973 (5.94%)');
label(1864, 872, '#930', 'end', '전일종가 8,190 (-3.31%)');
rect(P, 59, 78, 167, 93, '#c0c0c0');
rect(P, 60, 79, 166, 92, '#f4f4f4');
rect(P, 52, 82, 57, 88, '#808080');
rect(P, 53, 83, 56, 87, '#ccc');
label(63, 90, '#333', 'start', '다날 매물대 수(13)');
path(P, 'M59 89.5H167', '#e000b8', 1, { 'stroke-dasharray': '3 3' });

// score side bar and cross hair
rect(P, 1862, 77, 1865, 582, '#e8180c');
rect(P, 1862, 582, 1865, 894, '#1450c8');
path(P, 'M400.5 77V894M49 440.5H1866', '#f00');

// ---- volume panel ------------------------------------------------------
const V = document.getElementById('volume');
backdrop(V, 895, 1038, [929, 963, 996, 1030]);
const vFast = '53,1033 63,1031 72,1024 88,1029 98,1026 107,1029 117,1025 135,1017 144,1016 153,1012 162,1017 172,1020 190,1025 200,1026 227,1025 240,1024 263,1026 290,1025 317,1029 373,1029 410,1030 427,1028 437,1024 445,1017 453,1018 470,1016 480,1012 489,1017 500,1017 509,1004 520,997 529,991 538,987 554,975 563,980 573,975 583,959 592,953 610,953 619,949 628,945 637,953 646,954 657,952 670,946 682,937 691,943 701,945 710,943 719,934 728,928 737,919 747,919 764,908 773,916 782,919 791,917 801,911 811,913 820,923 829,927 842,923 855,919 864,915 873,918 887,918 900,912 910,912 918,918 929,920 947,917 956,923 966,932 975,927 994,928 1011,937 1025,929 1038,931 1065,928 1075,942 1083,938 1100,945 1118,941 1129,942 1147,938 1168,935 1186,940 1218,943 1236,940 1257,938 1267,940 1280,938 1296,943 1312,944 1330,950 1348,948 1369,943 1419,942 1466,946 1508,948 1534,947 1555,941 1581,942 1623,945 1654,948 1704,945 1715,936 1725,933 1743,935 1775,937 1785,933 1795,931 1809,935 1822,934 1832,937 1850,936';
const vSlow = '53,1034 117,1032 150,1029 173,1027 200,1026 260,1024 347,1024 377,1027 400,1029 433,1028 480,1026 503,1024 529,1021 561,1015 596,1003 637,988 686,972 730,957 762,946 788,939 815,933 846,930 882,924 927,919 951,917 1003,921 1034,923 1070,923 1100,928 1131,932 1168,935 1226,938 1283,939 1362,942 1424,943 1482,944 1534,946 1571,944 1613,945 1649,946 1707,945 1738,943 1780,941 1811,940 1850,938';
band(V, vFast, vSlow, '#f00', '#00f', '#f00', '#00f');
line(V, '53,1034 133,1032 233,1031 400,1030 445,1029 489,1027 534,1024 579,1021', '#930', 2);
line(V, '579,1021 623,1013 668,1007 712,1001 757,992 802,983 846,975 891,967 936,957 989,947 1034,939 1070,935 1100,932 1131,930 1205,928 1273,928 1335,932 1414,935 1477,939 1534,941 1602,942 1728,943 1806,943 1850,942', '#930', 2);
line(V, '53,1015 235,1015 400,1016 700,1015 820,1014 938,1013 1075,1012 1240,1011 1403,1010 1577,1009 1742,1008 1851,1008', '#000', 4);
path(V, 'M400.5 895V1038', '#f00');

// ---- axis ticks --------------------------------------------------------
function ticks(id, from, to, first, step, x, dir) {
  let d = '';
  for (let i = 0, y = first; y < to; i++, y = first + step * i)
    if (y > from) d += `M${x} ${Math.round(y) + .5}h${dir * (i % 5 === 0 ? 6 : 2)}`;
  path(document.getElementById(id), d, '#999');
}
ticks('ticks-main', 92, 894, 33.5, 18.28, 0, 1);
ticks('ticks-left', 900, 1038, 895.3, 6.74, 41, -1);
ticks('ticks-right', 900, 1038, 895.3, 6.74, 0, 1);
```
